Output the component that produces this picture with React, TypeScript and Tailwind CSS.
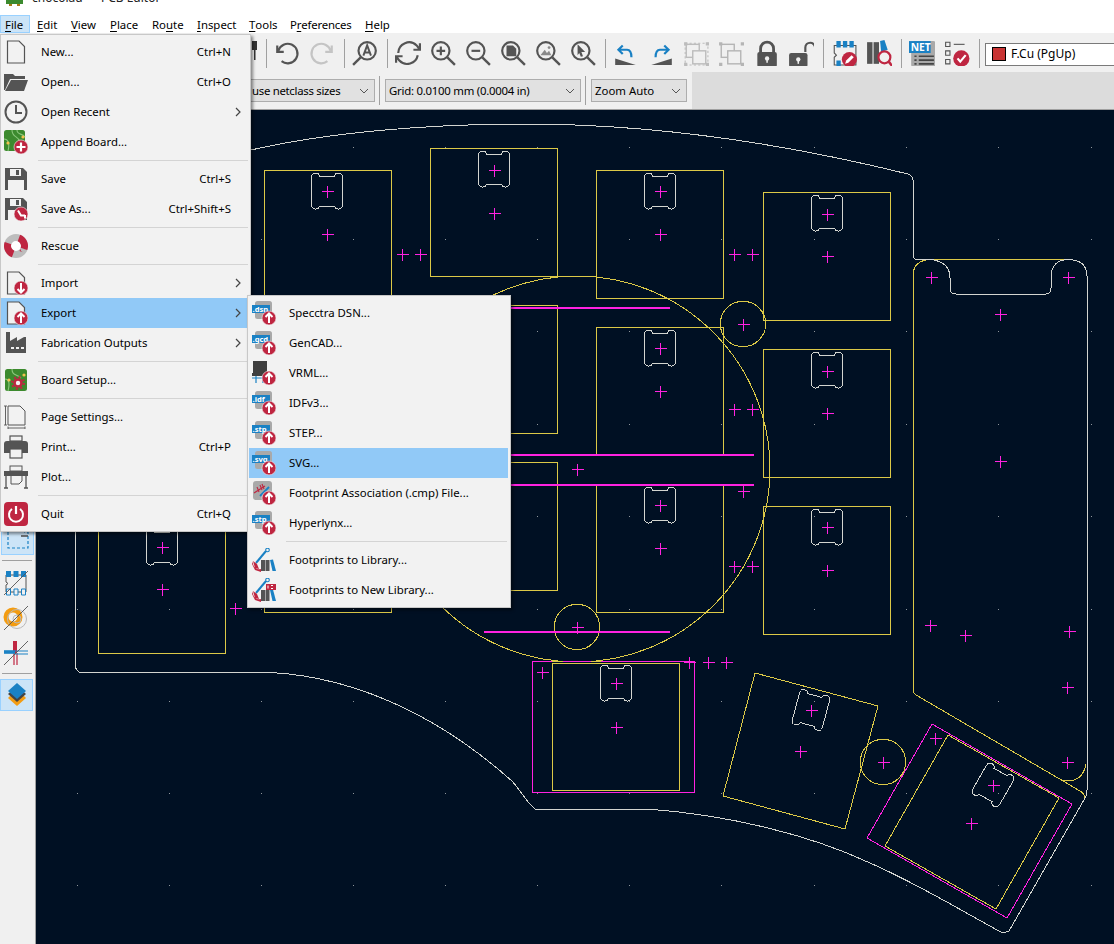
import type { ReactNode } from 'react';

const GRAY = '#545454';
const RED = '#bf2641';
const BLUE = '#1a81c4';
const YELLOW = '#dcc947';
const MAGENTA = '#ff22e0';
const WHITE = '#d3d5d0';

function Ic({ children, s = 24, w }: { children: ReactNode; s?: number; w?: number }) {
  return (
    <svg width={w ?? s} height={s} viewBox={`0 0 ${w ?? 24} 24`} className="shrink-0 block">
      {children}
    </svg>
  );
}

function Badge({ kind }: { kind: 'up' | 'down' | 'plus' | 'back' }) {
  return (
    <g>
      <circle cx="17" cy="17" r="7" fill={RED} stroke="#f2f2f2" strokeWidth="0.6" />
      {kind === 'up' && <path d="M17 22V13M13.5 16L17 12.5L20.5 16" fill="none" stroke="#fff" strokeWidth="2" />}
      {kind === 'down' && <path d="M17 12V21M13.5 18L17 21.5L20.5 18" fill="none" stroke="#fff" strokeWidth="2" />}
      {kind === 'plus' && <path d="M17 12.5V21.5M12.5 17H21.5" stroke="#fff" strokeWidth="2.2" />}
      {kind === 'back' && <path d="M14 13.5L17 18.5H21M21 21.5V18" fill="none" stroke="#fff" strokeWidth="2" />}
    </g>
  );
}

const Page = () => <path d="M3.500 1H15L20.500 6.500V23H3.500Z" fill="#f2f2f2" stroke={GRAY} strokeWidth="1.2" />;

function Pcb({ y = 0 }: { y?: number }) {
  return (
    <g>
      <rect x="0" y={y} width="21" height="21" rx="2.5" fill="#3c8a2e" />
      <path d={`M8 ${y}C8 ${y + 8} 14 ${y + 5} 16 ${y + 12}M13 ${y}C13 ${y + 5} 18 ${y + 3} 21 ${y + 7}M0 ${y + 9}C4 ${y + 9} 6 ${y + 13} 4 ${y + 21}`} fill="none" stroke="#8bc77c" strokeWidth="1.1" />
      <circle cx="4" cy={y + 13} r="1.6" fill="#f2c14e" />
      <circle cx="19" cy={y + 7} r="1.6" fill="#f2c14e" />
    </g>
  );
}

const NewIcon = () => <Ic><Page /></Ic>;
const OpenIcon = () => (
  <Ic>
    <path d="M0 20V4H9L11 6H21V9H6L1 20Z" fill={GRAY} />
    <path d="M1 21L7 10H24L20 21Z" fill={GRAY} />
  </Ic>
);
const RecentIcon = () => (
  <Ic>
    <circle cx="12" cy="12" r="10.500" fill="none" stroke={GRAY} strokeWidth="2" />
    <path d="M12 5V13H18" fill="none" stroke={GRAY} strokeWidth="2" />
  </Ic>
);
const AppendIcon = () => <Ic><Pcb /><Badge kind="plus" /></Ic>;
const Floppy = () => (
  <g>
    <path d="M1 1H19L23 5V23H1Z" fill={GRAY} />
    <rect x="6" y="2" width="11" height="7" fill="#f2f2f2" />
    <rect x="12" y="3" width="3" height="5" fill={GRAY} />
    <rect x="4" y="13" width="16" height="10" fill="#f2f2f2" />
  </g>
);
const SaveIcon = () => <Ic><Floppy /></Ic>;
const SaveAsIcon = () => <Ic><Floppy /><Badge kind="back" /></Ic>;
const RescueIcon = () => (
  <Ic>
    <circle cx="12" cy="12" r="8.500" fill="#fff" stroke="#bdbdbd" strokeWidth="7" />
    <circle cx="12" cy="12" r="8.500" fill="none" stroke={RED} strokeWidth="7" pathLength="100" strokeDasharray="25 25" transform="rotate(-70 12 12)" />
  </Ic>
);
const ImportIcon = () => <Ic><Page /><Badge kind="down" /></Ic>;
const ExportIcon = () => <Ic><Page /><Badge kind="up" /></Ic>;
const FabIcon = () => (
  <Ic>
    <path d="M2 1H6V10L13 6V10L20 6L22 6V22H2Z" fill={GRAY} />
    <path d="M7 17H10M12 17H15M17 17H20" stroke="#f2f2f2" strokeWidth="2" />
  </Ic>
);
const SetupIcon = () => (
  <Ic>
    <g transform="translate(1 0)"><rect x="0" y="1" width="22" height="22" rx="2.500" fill="#3c8a2e" /></g>
    <path d="M8 1C8 8 13 6 17 10M1 11C5 11 6 15 4 23" fill="none" stroke="#8bc77c" strokeWidth="1.1" />
    <circle cx="5" cy="12" r="1.600" fill="#f2c14e" />
    <circle cx="20" cy="7" r="1.600" fill="#f2c14e" />
    <circle cx="14" cy="15" r="3.500" fill="#f2f2f2" stroke={RED} strokeWidth="2.600" />
    <circle cx="14" cy="15" r="6" fill="none" stroke={RED} strokeWidth="2" strokeDasharray="2 2.700" />
  </Ic>
);
const PageSetIcon = () => (
  <Ic>
    <path d="M4 1H16L21 6V20H4Z" fill="#f2f2f2" stroke={GRAY} />
    <path d="M1.500 1V20M0 1H3M0 20H3M4 23H21M4 21.500V24M21 21.500V24" stroke={GRAY} strokeWidth="0.9" />
  </Ic>
);
const PrintIcon = () => (
  <Ic>
    <rect x="6" y="1" width="12" height="5" fill="#f2f2f2" stroke={GRAY} strokeWidth="1.2" />
    <path d="M0 9Q0 6 3 6H21Q24 6 24 9V18H0Z" fill={GRAY} />
    <rect x="6" y="14" width="12" height="9" fill="#f2f2f2" stroke={GRAY} strokeWidth="1.2" />
  </Ic>
);
const PlotIcon = () => (
  <Ic>
    <rect x="6" y="1" width="12" height="5" fill="#f2f2f2" stroke={GRAY} />
    <path d="M0 6H24V11H0Z" fill={GRAY} />
    <path d="M2 11V23M22 11V23M0 23H4M20 23H24" stroke={GRAY} strokeWidth="1.3" />
    <path d="M7 11V19H15L18 16V11" fill="#f2f2f2" stroke={GRAY} />
  </Ic>
);
const QuitIcon = () => (
  <Ic>
    <rect width="24" height="24" rx="4" fill={RED} />
    <path d="M8 7A7 7 0 1 0 16 7" fill="none" stroke="#fff" strokeWidth="2" />
    <path d="M12 4V12" stroke="#fff" strokeWidth="2.2" />
  </Ic>
);

function DocTag({ ext }: { ext: string }) {
  return (
    <Ic>
      <rect x="3" y="0" width="17" height="18" rx="2.5" fill="#a9a9a9" />
      <rect x="0" y="4" width="18" height="8" fill={BLUE} />
      <text x="0.5" y="10.6" fontSize="7.6" fontWeight="700" fill="#fff">{ext}</text>
      <Badge kind="up" />
    </Ic>
  );
}
const VrmlIcon = () => (
  <Ic>
    <rect x="1" y="0" width="14" height="12" fill="#3f3f3f" />
    <rect x="0" y="12" width="15" height="3" fill="#3f3f3f" />
    <path d="M0 17H16M4 15V22M11 15V22" stroke={BLUE} strokeWidth="1.2" />
    <Badge kind="up" />
  </Ic>
);
const CmpIcon = () => (
  <Ic>
    <rect x="1" y="0" width="19" height="19" rx="3" fill="#a9a9a9" />
    <path d="M2 12L13 5M5 6L7 11M8 4L10 9M10 3L12 8" stroke={RED} strokeWidth="1.1" />
    <path d="M8 15L17 6" stroke={BLUE} strokeWidth="1.8" />
    <Badge kind="up" />
  </Ic>
);
function FpLib({ isNew }: { isNew?: boolean }) {
  return (
    <Ic>
      <path d="M4 15L14 3" stroke={BLUE} strokeWidth="2" />
      <circle cx="15.5" cy="2" r="1.8" fill="none" stroke={BLUE} strokeWidth="1.1" />
      <path d="M1 13C0 19 5 22 9 21L9 24L3 22L0 16Z" fill={RED} />
      <path d="M1 13L5 16L7 21L3 20Z" fill={RED} />
      <rect x="9" y="12" width="4" height="11" fill={GRAY} />
      <rect x="13.5" y="12" width="4" height="11" fill={GRAY} />
      <path d="M18 12L21 11.5L24 23L20.5 23Z" fill={BLUE} />
      {isNew && <rect x="14" y="6" width="11" height="6" fill={RED} />}
      {isNew && <path d="M16 7.5V10.5M19 7.5H21M19 10.5H21" stroke="#fff" strokeWidth="1" />}
    </Ic>
  );
}

type MenuItem = { label: string; shortcut?: string; arrow?: boolean; active?: boolean; icon: ReactNode } | 'sep';

const fileMenu: MenuItem[] = [
  { label: 'New...', shortcut: 'Ctrl+N', icon: <NewIcon /> },
  { label: 'Open...', shortcut: 'Ctrl+O', icon: <OpenIcon /> },
  { label: 'Open Recent', arrow: true, icon: <RecentIcon /> },
  { label: 'Append Board...', icon: <AppendIcon /> },
  'sep',
  { label: 'Save', shortcut: 'Ctrl+S', icon: <SaveIcon /> },
  { label: 'Save As...', shortcut: 'Ctrl+Shift+S', icon: <SaveAsIcon /> },
  'sep',
  { label: 'Rescue', icon: <RescueIcon /> },
  'sep',
  { label: 'Import', arrow: true, icon: <ImportIcon /> },
  { label: 'Export', arrow: true, active: true, icon: <ExportIcon /> },
  { label: 'Fabrication Outputs', arrow: true, icon: <FabIcon /> },
  'sep',
  { label: 'Board Setup...', icon: <SetupIcon /> },
  'sep',
  { label: 'Page Settings...', icon: <PageSetIcon /> },
  { label: 'Print...', shortcut: 'Ctrl+P', icon: <PrintIcon /> },
  { label: 'Plot...', icon: <PlotIcon /> },
  'sep',
  { label: 'Quit', shortcut: 'Ctrl+Q', icon: <QuitIcon /> },
];

const exportMenu: MenuItem[] = [
  { label: 'Specctra DSN...', icon: <DocTag ext=".dsn" /> },
  { label: 'GenCAD...', icon: <DocTag ext=".gcd" /> },
  { label: 'VRML...', icon: <VrmlIcon /> },
  { label: 'IDFv3...', icon: <DocTag ext=".idf" /> },
  { label: 'STEP...', icon: <DocTag ext=".stp" /> },
  { label: 'SVG...', active: true, icon: <DocTag ext=".svg" /> },
  { label: 'Footprint Association (.cmp) File...', icon: <CmpIcon /> },
  { label: 'Hyperlynx...', icon: <DocTag ext=".stp" /> },
  'sep',
  { label: 'Footprints to Library...', icon: <FpLib /> },
  { label: 'Footprints to New Library...', icon: <FpLib isNew /> },
];

function MenuRows({ items }: { items: MenuItem[] }) {
  return (
    <>
      {items.map((it, i) =>
        it === 'sep' ? (
          <div key={i} className="h-[7px] flex items-center pl-[37px] pr-[1px]">
            <div className="h-px w-full bg-[#d4d4d4]" />
          </div>
        ) : (
          <div key={i} className={`h-[30px] flex items-center text-black ${it.active ? 'bg-[#91c9f7]' : ''}`}>
            <div className="w-[30px] flex justify-center shrink-0">{it.icon}</div>
            <div className="ml-[10px] flex-1 whitespace-nowrap">{it.label}</div>
            {it.shortcut && <div className="whitespace-nowrap">{it.shortcut}</div>}
            <div className="w-[18px] shrink-0 flex justify-center pr-[4px]">
              {it.arrow && (
                <svg width="6" height="10" viewBox="0 0 6 10">
                  <path d="M1 1L5 5L1 9" fill="none" stroke="#444" strokeWidth="1.2" />
                </svg>
              )}
            </div>
          </div>
        ),
      )}
    </>
  );
}

const menuBar = [
  { pre: '', u: 'F', post: 'ile', cls: 'w-[30px] pl-[4px] bg-[#cce4f7] border border-[#99d1ff]' },
  { pre: '', u: 'E', post: 'dit', cls: 'w-[34px] pl-[7px]' },
  { pre: '', u: 'V', post: 'iew', cls: 'w-[39px] pl-[7px]' },
  { pre: '', u: 'P', post: 'lace', cls: 'w-[42px] pl-[7px]' },
  { pre: 'Ro', u: 'u', post: 'te', cls: 'w-[45px] pl-[7px]' },
  { pre: '', u: 'I', post: 'nspect', cls: 'w-[52px] pl-[7px]' },
  { pre: '', u: 'T', post: 'ools', cls: 'w-[41px] pl-[7px]' },
  { pre: 'P', u: 'r', post: 'eferences', cls: 'w-[75px] pl-[7px] tracking-[-0.2px]' },
  { pre: '', u: 'H', post: 'elp', cls: 'w-[50px] pl-[7px]' },
];

function Magnifier({ children }: { children?: ReactNode }) {
  return (
    <Ic s={26}>
      <circle cx="10" cy="10" r="8" fill="none" stroke={GRAY} strokeWidth="2" />
      <path d="M16 16L23 23" stroke={GRAY} strokeWidth="2.2" />
      {children}
    </Ic>
  );
}

const Btn = ({ children }: { children?: ReactNode }) => (
  <div className="w-[35px] h-[26px] flex items-center justify-center shrink-0">{children}</div>
);
const Sep = () => <div className="w-px h-[29px] bg-[#a0a0a0] ml-[5px] mr-[2px] shrink-0" />;

function GroupIcon({ dim }: { dim?: boolean }) {
  const c = dim ? '#b5b5b5' : '#bcbcbc';
  return (
    <Ic s={26}>
      <rect x="2" y="3" width="21" height="20" fill="none" stroke={c} strokeDasharray={dim ? '0' : '2 2'} opacity={dim ? 0 : 1} />
      <rect x="3" y="4" width="12" height="12" fill="#f0f0f0" stroke={c} strokeWidth="1.3" />
      <rect x="9" y="10" width="12" height="12" fill="#f0f0f0" stroke={c} strokeWidth="1.3" />
      <path d="M1 2h3v3H1zM21 2h3v3h-3zM1 21h3v3H1zM21 21h3v3h-3z" fill={c} />
    </Ic>
  );
}
const Chevron = () => (
  <svg width="10" height="6" viewBox="0 0 10 6" className="shrink-0">
    <path d="M1 1L5 5L9 1" fill="none" stroke="#555" strokeWidth="1" />
  </svg>
);
function Dropdown({ label, cls }: { label: string; cls: string }) {
  return (
    <div className={`h-[23px] flex items-center justify-between shrink-0 bg-[#e1e1e1] border border-[#adadad] whitespace-nowrap pr-[5px] ${cls}`}>
      <span>{label}</span>
      <Chevron />
    </div>
  );
}

const crosses: [number, number][] = [
  [327, 191], [327, 234], [494, 170], [494, 213], [660, 191], [660, 234], [827, 214], [827, 256],
  [660, 348], [660, 391], [827, 371], [827, 413], [660, 505], [660, 548], [827, 527], [827, 570],
  [162, 547], [162, 589], [235, 608], [402, 254], [420, 254], [734, 254], [752, 254], [743, 324],
  [734, 409], [752, 409], [577, 469], [743, 491], [734, 566], [752, 566], [577, 627], [931, 277],
  [1068, 277], [1000, 314], [1000, 461], [930, 625], [965, 635], [1069, 631], [1067, 687],
  [616, 683], [616, 727], [542, 672], [689, 662], [708, 662], [726, 662], [800, 751], [811, 710],
  [883, 762], [935, 738], [993, 785], [971, 823], [1067, 762],
];
const squares: [number, number][] = [
  [264, 170], [430, 148], [596, 170], [763, 192], [596, 327], [763, 349], [596, 484], [763, 506],
  [430, 305], [430, 462], [264, 484], [98, 525],
];
const slots: [number, number, number][] = [
  [327, 191, 0], [494, 169, 0], [660, 191, 0], [827, 213, 0], [660, 348, 0], [827, 370, 0],
  [660, 505, 0], [827, 527, 0], [162, 547, 0], [616, 683, 0], [811, 710, 15], [993, 785, 30],
];
const dotXs = [77, 169, 261, 353, 445, 537, 629, 721, 814, 906, 998, 1091];
const dotYs = [147, 239, 331, 424, 516, 609, 701, 793, 885];

const slotPath =
  'M-15.5 -13C-15.5 -16.5 -14 -18 -11.5 -18C-9 -18 -8 -17 -7.5 -15L7.5 -15C8 -17 9 -18 11.5 -18C14 -18 15.5 -16.5 15.5 -13L15.5 13C15.5 16.5 14 18 11.5 18C9 18 8 17 7.5 15L-7.5 15C-8 17 -9 18 -11.5 18C-14 18 -15.5 16.5 -15.5 13Z';

function Board() {
  return (
    <svg viewBox="36 110 1078 834" width="1078" height="834" className="block flex-1" shapeRendering="crispEdges" fill="none">
      {dotXs.map((x) => dotYs.map((y) => <rect key={`${x}-${y}`} x={x} y={y} width="1" height="1" fill="#8f959b" stroke="none" />))}

      <g stroke={YELLOW}>
        {squares.map(([x, y]) => <rect key={`${x}-${y}`} x={x + 0.5} y={y + 0.5} width="127" height="128" />)}
        <rect x="552.5" y="663.5" width="127" height="127" />
        <circle cx="577" cy="469" r="193" />
        <circle cx="743" cy="324" r="22.7" />
        <circle cx="577" cy="627" r="22.7" />
        <circle cx="883" cy="762" r="22.7" />
        <path d="M755 673L878 706L845 829L723 796Z" />
        <path d="M948 735L1059 798L996 909L885 846Z" />
        <path d="M913 690L913 276Q913 260 931 259.500L1069 259.500" />
        <path d="M913 690Q914 694 916 695L1058 778L1080 791Q1085 794 1085 798" />
        <path d="M1086 764Q1083 781 1067 781Q1062 781 1058 778" />
      </g>

      <g stroke={WHITE}>
        <path d="M251 150C330 132 430 124 525 124C660 124 790 145 908 174Q913 176 913 180L913 254Q913 259 917 259.500L931 259.500Q950 262 950 278L950 288Q950 294 956 294L1046 294Q1051 294 1051 288L1051 278Q1051 260 1068 259.500Q1087 260 1087 276L1087 790Q1087 795 1085 798L1009 931Q1003 934 999 931C960 910 920 885 870 863C810 835 730 815 647 809L535 809L529 803L513 782C435 712 345 672 253 672L79 672L75.500 668L75.500 531" />
        {slots.map(([x, y, r]) => (
          <path key={`${x}-${y}`} d={slotPath} transform={`translate(${x} ${y}) rotate(${r})`} />
        ))}
      </g>

      <g stroke={MAGENTA}>
        <rect x="532.5" y="661.5" width="162" height="131" />
        <path d="M932 724L1072 804L1007 918L867 838Z" />
        <path d="M511 308H670M511 455H754M511 485H754M484 632H670" strokeWidth="2.4" />
        {crosses.map(([x, y]) => (
          <path key={`${x}-${y}`} d={`M${x - 5.5} ${y + 0.5}H${x + 6.5}M${x + 0.5} ${y - 5.5}V${y + 6.5}`} />
        ))}
      </g>
      <path d="M552 661.500H563M591 661.500H601" stroke={YELLOW} />
    </svg>
  );
}

function LeftToolbar() {
  return (
    <div className="w-[36px] shrink-0 bg-[#f0f0f0] border-r border-[#a0a0a0] flex flex-col items-start">
      <div className="h-[413px] shrink-0" />
      <div className="w-[33px] h-[32px] ml-px bg-[#cce4f7] border border-[#99d1ff] flex items-center justify-center">
        <svg width="24" height="24" viewBox="0 0 24 24">
          <path d="M2 5V21H22V5H18" fill="none" stroke={BLUE} strokeWidth="1.2" strokeDasharray="3 2" />
          <path d="M15 9H22" stroke={GRAY} strokeWidth="1.6" />
        </svg>
      </div>
      <div className="h-px w-[30px] ml-[2px] mt-[5px] bg-[#a0a0a0]" />
      <div className="h-[35px] w-[32px] mt-[4px] flex items-center justify-center">
        <svg width="26" height="26" viewBox="0 0 26 26">
          <path d="M3 5H23V22H3V15L5 13.500L3 12Z" fill="none" stroke={GRAY} />
          <path d="M3 1h5v6H3zM10.500 1h5v6h-5zM18 1h5v6h-5z" fill={BLUE} />
          <path d="M3.500 19h4v6h-4zM11 19h4v6h-4zM18.500 19h4v6h-4z" fill="#f0f0f0" stroke={BLUE} />
          <path d="M1 25L25 1" stroke={GRAY} strokeWidth="0.9" />
        </svg>
      </div>
      <div className="h-[35px] w-[32px] flex items-center justify-center">
        <svg width="26" height="26" viewBox="0 0 26 26">
          <circle cx="10" cy="12" r="7" fill="none" stroke="#f39c12" strokeWidth="5" />
          <circle cx="14" cy="14" r="9.500" fill="none" stroke="#b9b9b9" />
          <circle cx="14" cy="14" r="4" fill="none" stroke="#b9b9b9" />
          <path d="M1 25L25 1" stroke={GRAY} strokeWidth="0.9" />
        </svg>
      </div>
      <div className="h-[35px] w-[32px] flex items-center justify-center">
        <svg width="26" height="26" viewBox="0 0 26 26">
          <path d="M12 1V13" stroke={RED} strokeWidth="4" />
          <path d="M11 13V25M14 13V25" stroke={RED} strokeWidth="1.2" />
          <path d="M1 12H12" stroke={BLUE} strokeWidth="3.6" />
          <path d="M12 11H25M12 14H25" stroke={BLUE} strokeWidth="1" />
          <path d="M1 25L25 1" stroke={GRAY} strokeWidth="0.9" />
        </svg>
      </div>
      <div className="h-px w-[30px] ml-[2px] mt-[3px] bg-[#a0a0a0]" />
      <div className="w-[33px] h-[32px] mt-[5px] bg-[#cce4f7] border border-[#99d1ff] flex items-center justify-center">
        <svg width="20" height="24" viewBox="0 0 20 24">
          <path d="M10 6L19 15L10 23L1 15Z" fill="#f39c12" />
          <path d="M10 3L19 11L10 19L1 11Z" fill="#444" />
          <path d="M10 0L19 8L10 16L1 8Z" fill={BLUE} />
        </svg>
      </div>
    </div>
  );
}

export default function App() {
  return (
    <div className="relative w-[1114px] h-[944px] overflow-hidden bg-white flex flex-col text-[11.4px] leading-none text-black font-['Noto_Sans',sans-serif]">
      {/* title bar, cut off by the top of the shot */}
      <div className="h-[15px] shrink-0 overflow-hidden flex items-start pl-[6px]">
        <svg width="17" height="6" viewBox="0 0 17 6" className="shrink-0">
          <rect x="0" y="0" width="17" height="4" fill="#3c8a2e" />
          <rect x="3" y="4" width="3" height="2" fill="#a87a16" />
          <rect x="11" y="4" width="3" height="2" fill="#a87a16" />
        </svg>
        <span className="ml-[9px] -mt-[8px] whitespace-nowrap text-[12px] text-[#222]">chocolad — PCB Editor</span>
      </div>

      <div className="h-[18px] shrink-0 flex items-stretch bg-white">
        {menuBar.map((m) => (
          <div key={m.u + m.post} className={`flex items-center whitespace-pre shrink-0 pt-[2px] ${m.cls}`}>
            {m.pre}<span className="underline underline-offset-2">{m.u}</span>{m.post}
          </div>
        ))}
      </div>

      <div className="h-[39px] shrink-0 bg-[#f0f0f0] flex items-center pl-[226px] pt-px">
        <Btn>
          <svg width="35" height="24" viewBox="0 0 35 24">
            <rect x="26" y="0" width="5" height="9" fill="#333" />
            <rect x="28" y="9" width="1.500" height="10" fill="#333" />
          </svg>
        </Btn>
        <Sep />
        <Btn>
          <Ic s={26}>
            <path d="M3 5V11H9" fill="none" stroke={GRAY} strokeWidth="2" />
            <path d="M4 10A9 9 0 1 1 7 19.500" fill="none" stroke={GRAY} strokeWidth="2" />
          </Ic>
        </Btn>
        <Btn>
          <Ic s={26}>
            <path d="M21 5V11H15" fill="none" stroke="#c4c4c4" strokeWidth="2" />
            <path d="M20 10A9 9 0 1 0 17 19.500" fill="none" stroke="#c4c4c4" strokeWidth="2" />
          </Ic>
        </Btn>
        <Sep />
        <Btn>
          <Ic s={26}>
            <circle cx="14" cy="10" r="8" fill="none" stroke={GRAY} strokeWidth="2" />
            <path d="M8 16L1 23" stroke={GRAY} strokeWidth="2.2" />
            <path d="M10.500 14.500L14 5L17.500 14.500M11.500 11.500H16.500" fill="none" stroke={GRAY} strokeWidth="1.8" />
          </Ic>
        </Btn>
        <Sep />
        <Btn>
          <Ic s={26}>
            <path d="M3 12A10 10 0 0 1 20 5L23 9M23 3V9H17" fill="none" stroke={GRAY} strokeWidth="2" />
            <path d="M21 14A10 10 0 0 1 4 19L1 15M1 21V15H7" fill="none" stroke={GRAY} strokeWidth="2" />
          </Ic>
        </Btn>
        <Btn><Magnifier><path d="M10 6V14M6 10H14" stroke={GRAY} strokeWidth="2" /></Magnifier></Btn>
        <Btn><Magnifier><path d="M6 10H14" stroke={GRAY} strokeWidth="2" /></Magnifier></Btn>
        <Btn><Magnifier><path d="M6 5H12L15 8V15H6Z" fill={GRAY} /></Magnifier></Btn>
        <Btn><Magnifier><path d="M5 14L9 9L11 12L13 10L15 14Z" fill="#8a8a8a" /><circle cx="13" cy="7" r="1.300" fill="#8a8a8a" /></Magnifier></Btn>
        <Btn><Magnifier><path d="M7 4L14 11H10.500L12 15L10 15.500L8.500 12L7 14Z" fill={GRAY} /></Magnifier></Btn>
        <Sep />
        <Btn>
          <Ic s={26}>
            <path d="M2 23V17L21 23Z" fill={GRAY} />
            <path d="M9 5L5 9L9 13M5 9H13Q17 9 17 16" fill="none" stroke={BLUE} strokeWidth="2" />
          </Ic>
        </Btn>
        <Btn>
          <Ic s={26}>
            <path d="M22 23V17L3 23Z" fill={GRAY} />
            <path d="M15 5L19 9L15 13M19 9H11Q7 9 7 16" fill="none" stroke={BLUE} strokeWidth="2" />
          </Ic>
        </Btn>
        <Btn><GroupIcon /></Btn>
        <Btn><GroupIcon dim /></Btn>
        <Btn>
          <Ic s={26}>
            <path d="M7 12V8A6 6 0 0 1 19 8V12" fill="none" stroke={GRAY} strokeWidth="2.6" />
            <rect x="4" y="11" width="18" height="14" rx="2" fill={GRAY} />
            <circle cx="13" cy="17" r="2" fill="#f0f0f0" />
            <path d="M13 17V21" stroke="#f0f0f0" strokeWidth="1.4" />
          </Ic>
        </Btn>
        <Btn>
          <Ic s={26}>
            <path d="M16 11V7A4.500 4.500 0 0 1 25 7V11" fill="none" stroke={GRAY} strokeWidth="2" />
            <rect x="1" y="12" width="17" height="13" rx="2" fill={GRAY} />
            <circle cx="9.500" cy="18" r="2" fill="#f0f0f0" />
            <path d="M9.500 18V22" stroke="#f0f0f0" strokeWidth="1.4" />
          </Ic>
        </Btn>
        <Sep />
        <Btn>
          <Ic s={26}>
            <path d="M3 5H23V23H3V16L5 14L3 12Z" fill="none" stroke={GRAY} />
            <path d="M5 1h4v6H5zM11 1h4v6h-4zM17 1h4v6h-4zM5 19h4v6H5z" fill={BLUE} />
            <circle cx="17" cy="18" r="7" fill={RED} />
            <path d="M13 22L14 19L19 14L21 16L16 21Z" fill="#fff" />
          </Ic>
        </Btn>
        <Btn>
          <Ic s={26}>
            <rect x="1" y="2" width="5" height="20" fill={GRAY} />
            <rect x="7" y="2" width="5" height="20" fill={GRAY} />
            <path d="M13 1L17 0L20 9L14 11Z" fill={BLUE} />
            <circle cx="17" cy="16" r="5.500" fill="#f0f0f0" stroke={RED} strokeWidth="2" />
            <path d="M21 20L25 25" stroke={RED} strokeWidth="2.4" />
          </Ic>
        </Btn>
        <Sep />
        <Btn>
          <Ic s={26}>
            <rect x="2" y="1" width="23" height="24" rx="2.500" fill="#a9a9a9" />
            <rect x="0" y="1" width="20" height="11" fill={BLUE} />
            <text x="1.500" y="10" fontSize="9.500" fontWeight="700" fill="#fff">NET</text>
            <path d="M5 15h2M9 15h14M5 18.500h2M9 18.500h14M5 22h2M9 22h14" stroke="#444" strokeWidth="1.6" />
          </Ic>
        </Btn>
        <Btn>
          <Ic s={26}>
            <path d="M1.500 2h4v4h-4zM1.500 10h4v4h-4zM1.500 18h4v4h-4z" fill="#f0f0f0" stroke={GRAY} />
            <path d="M9 4H19" stroke={GRAY} />
            <circle cx="16" cy="17" r="7.500" fill={RED} />
            <path d="M12.500 17L15 20L20 14" fill="none" stroke="#fff" strokeWidth="2" />
          </Ic>
        </Btn>
        <Sep />
        <div className="ml-[3px] mt-[2px] h-[23px] w-[150px] shrink-0 bg-white border border-[#7a7a7a] flex items-center pl-[6px]">
          <div className="w-[14px] h-[14px] bg-[#c83434] border border-black shrink-0" />
          <span className="ml-[5px] text-[12px] whitespace-nowrap">F.Cu (PgUp)</span>
          <div className="ml-[42px]"><Chevron /></div>
        </div>
      </div>

      <div className="h-[37px] shrink-0 flex items-center bg-[#dcdcdc]">
        <div className="h-full w-[692px] shrink-0 bg-[#f0f0f0] flex items-center pl-[245px]">
          <Dropdown label="use netclass sizes" cls="w-[130px] pl-[6px] tracking-[-0.3px]" />
          <div className="w-px h-[29px] bg-[#a0a0a0] ml-[4px] mr-[5px] shrink-0" />
          <Dropdown label="Grid: 0.0100 mm (0.0004 in)" cls="w-[196px] pl-[3px] tracking-[-0.25px]" />
          <div className="w-px h-[29px] bg-[#a0a0a0] ml-[4px] mr-[5px] shrink-0" />
          <Dropdown label="Zoom Auto" cls="w-[96px] pl-[3px]" />
        </div>
      </div>
      <div className="h-px shrink-0 bg-[#a0a0a0]" />

      <div className="flex-1 min-h-0 flex bg-[#001023]">
        <LeftToolbar />
        <Board />
      </div>

      {/* open File menu and its Export submenu */}
      <div className="absolute left-0 top-[34px] w-[251px] bg-[#f2f2f2] border border-[#c8c8c8] pt-[2px] pb-[2px] pr-px shadow-[2px_2px_3px_rgba(0,0,0,0.45)]">
        <MenuRows items={fileMenu} />
      </div>
      <div className="absolute left-[247px] top-[295px] w-[264px] bg-[#f2f2f2] border border-[#c8c8c8] pt-[2px] pb-[2px] pl-px pr-[2px] shadow-[2px_2px_3px_rgba(0,0,0,0.45)]">
        <MenuRows items={exportMenu} />
      </div>
    </div>
  );
}
